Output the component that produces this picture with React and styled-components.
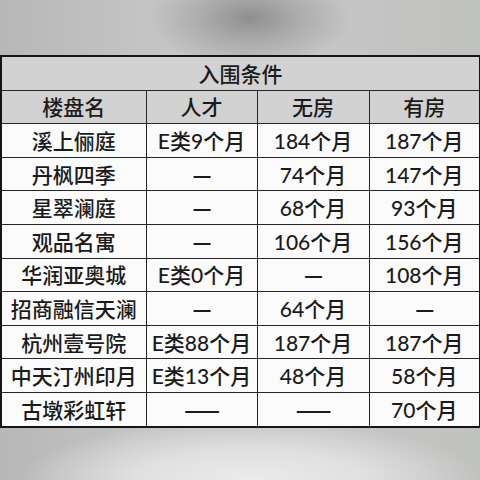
import React from 'react';
import styled, { createGlobalStyle } from 'styled-components';

const GlobalStyle = createGlobalStyle`
  html, body {
    margin: 0;
    padding: 0;
  }
  body {
    font-family: Lato, "Noto Sans CJK SC", sans-serif;
  }
`;

const Page = styled.div`
  width: 480px;
  height: 480px;
  box-sizing: border-box;
  padding-top: 55px;
  overflow: hidden;
  background:
    radial-gradient(ellipse 100px 50px at 250px 18px, #8e908e 0%, rgba(150, 152, 150, 0.6) 45%, rgba(195, 195, 195, 0) 100%),
    radial-gradient(ellipse 230px 60px at 250px 480px, #ebebeb 0%, #e0e0e0 50%, rgba(210, 210, 210, 0) 100%),
    linear-gradient(90deg, #b7b7b7 0%, #c4c4c4 30%, #c6c6c6 60%, #c0c2bf 100%);
`;

const Table = styled.table`
  width: 479px;
  border-collapse: collapse;
  table-layout: fixed;
  border: 2px solid #151515;
  color: #1b1b1b;
  font-size: 21px;
  font-weight: 500;
`;

const Cell = styled.td`
  height: 32.6px;
  padding: 0;
  text-align: center;
  vertical-align: middle;
  border: 1.5px solid #262626;
  background: ${p => (p.$head ? '#d2d2d2' : '#fbfbfb')};
  line-height: 1;
  white-space: nowrap;
`;

const Dash = styled.span`
  font-family: "Noto Sans CJK SC", sans-serif;
  font-weight: 700;
  letter-spacing: -1px;
`;

const Col = styled.col`
  width: ${p => p.$w}px;
`;

const rows = [
  ['溪上俪庭', 'E类9个月', '184个月', '187个月'],
  ['丹枫四季', '—', '74个月', '147个月'],
  ['星翠澜庭', '—', '68个月', '93个月'],
  ['观品名寓', '—', '106个月', '156个月'],
  ['华润亚奥城', 'E类0个月', '—', '108个月'],
  ['招商融信天澜', '—', '64个月', '—'],
  ['杭州壹号院', 'E类88个月', '187个月', '187个月'],
  ['中天汀州印月', 'E类13个月', '48个月', '58个月'],
  ['古墩彩虹轩', '——', '——', '70个月'],
];

export default function App() {
  return (
    <>
      <GlobalStyle />
      <Page>
        <Table>
          <colgroup>
            <Col $w={145} />
            <Col $w={111} />
            <Col $w={112} />
            <Col $w={111} />
          </colgroup>
          <tbody>
            <tr>
              <Cell $head colSpan={4}>入围条件</Cell>
            </tr>
            <tr>
              <Cell $head>楼盘名</Cell>
              <Cell $head>人才</Cell>
              <Cell $head>无房</Cell>
              <Cell $head>有房</Cell>
            </tr>
            {rows.map(r => (
              <tr key={r[0]}>
                {r.map((v, i) => (
                  <Cell key={i}>{v.startsWith('—') ? <Dash>{v}</Dash> : v}</Cell>
                ))}
              </tr>
            ))}
          </tbody>
        </Table>
      </Page>
    </>
  );
}
